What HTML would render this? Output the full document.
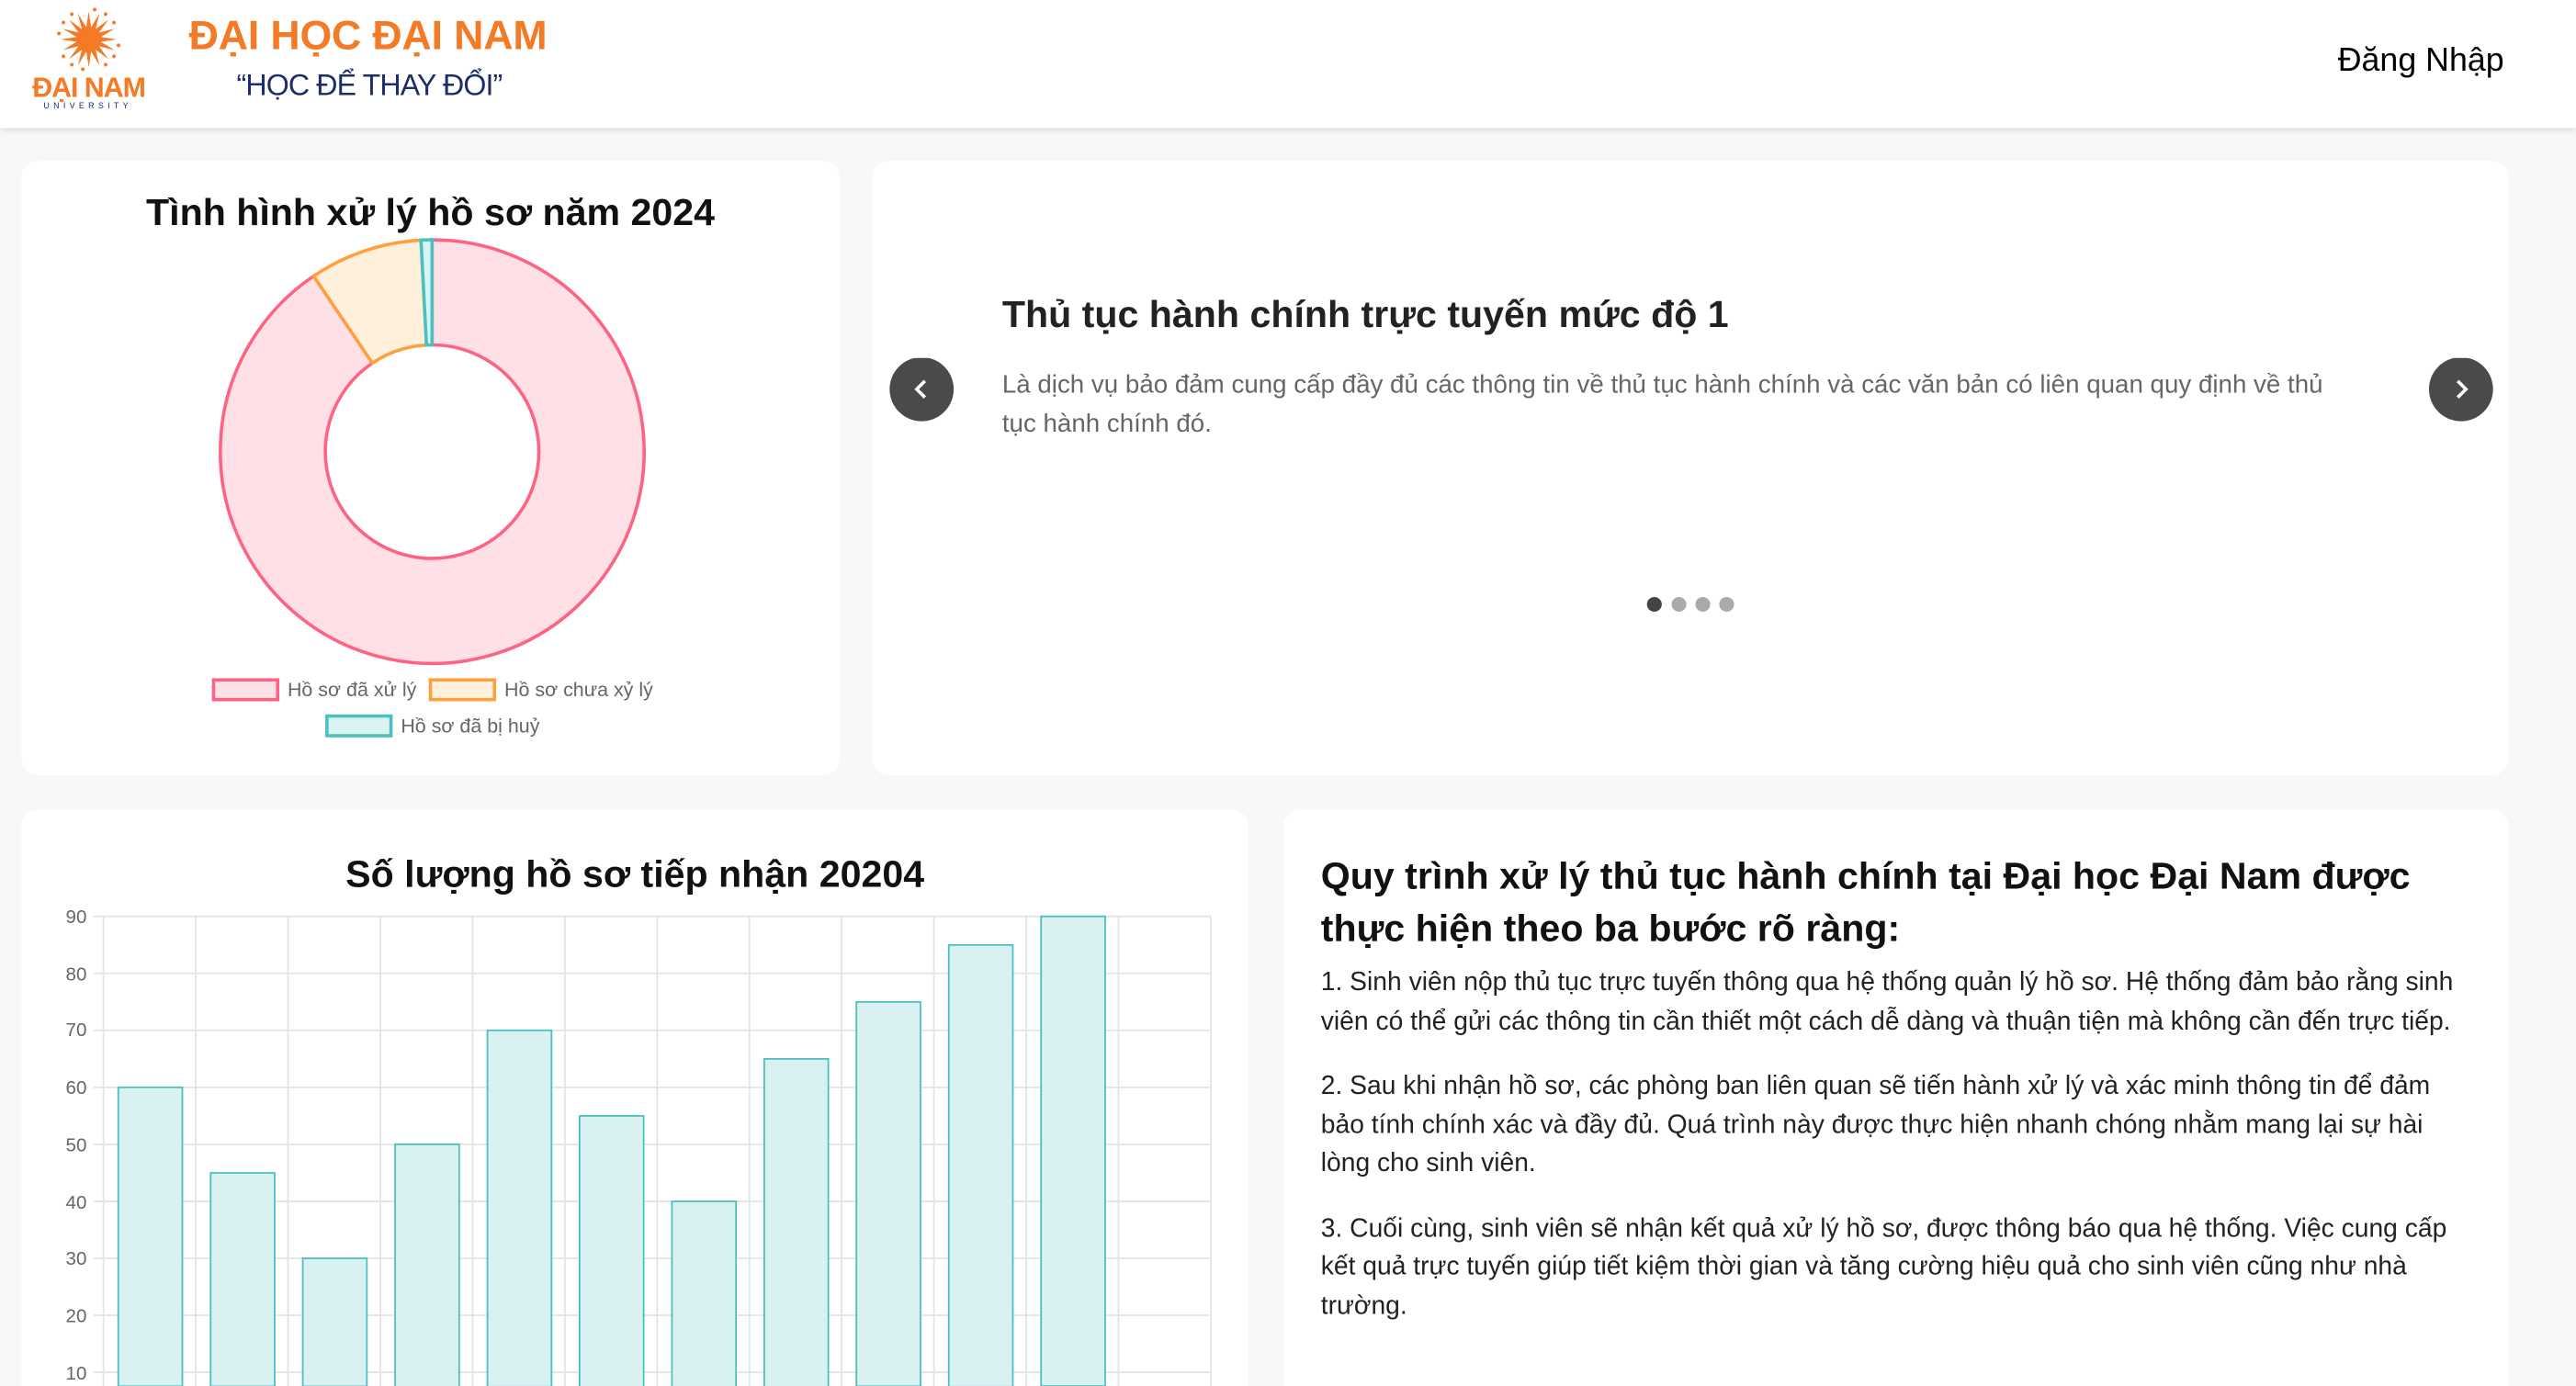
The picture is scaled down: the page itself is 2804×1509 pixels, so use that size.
<!DOCTYPE html>
<html><head><meta charset="utf-8"><style>
*{margin:0;padding:0;box-sizing:border-box}
html,body{width:2804px;height:1509px;overflow:hidden;background:#f7f8fa}
#w{position:absolute;left:0;top:0;width:1568px;height:844px;overflow:hidden;transform:scale(1.78827,1.7880);transform-origin:0 0;font-family:"Liberation Sans",Arial,sans-serif;background:#f7f8fa}
.ab{position:absolute}
.card{position:absolute;background:#fff;border-radius:10px}
header{position:absolute;left:0;top:0;width:1568px;height:78px;background:#fff;box-shadow:0 1px 4px rgba(0,0,0,.15)}
h2{font-weight:bold;color:#111;font-size:23px}
p.t{font-size:15.8px;color:#222;line-height:23.5px}
</style></head><body><div id="w">
<header>
<svg class="ab" style="left:33px;top:3px" width="42" height="42" viewBox="-21 -21 42 42">
<g fill="#f47a25">
<polygon points="0,-17 2.6,0 0,17 -2.6,0"/>
<polygon transform="rotate(22.5)" points="0,-17 2.6,0 0,17 -2.6,0"/>
<polygon transform="rotate(45)" points="0,-17 2.6,0 0,17 -2.6,0"/>
<polygon transform="rotate(67.5)" points="0,-17 2.6,0 0,17 -2.6,0"/>
<polygon transform="rotate(90)" points="0,-17 2.6,0 0,17 -2.6,0"/>
<polygon transform="rotate(112.5)" points="0,-17 2.6,0 0,17 -2.6,0"/>
<polygon transform="rotate(135)" points="0,-17 2.6,0 0,17 -2.6,0"/>
<polygon transform="rotate(157.5)" points="0,-17 2.6,0 0,17 -2.6,0"/>
<circle r="7"/>
<circle cx="0" cy="-18.5" r="1.1" transform="rotate(11.25)"/>
<circle cx="0" cy="-18.5" r="1.1" transform="rotate(56.25)"/>
<circle cx="0" cy="-18.5" r="1.1" transform="rotate(101.25)"/>
<circle cx="0" cy="-18.5" r="1.1" transform="rotate(146.25)"/>
<circle cx="0" cy="-18.5" r="1.1" transform="rotate(191.25)"/>
<circle cx="0" cy="-18.5" r="1.1" transform="rotate(236.25)"/>
<circle cx="0" cy="-18.5" r="1.1" transform="rotate(281.25)"/>
<circle cx="0" cy="-18.5" r="1.1" transform="rotate(326.25)"/>
<circle cx="0" cy="-18.5" r="1.1" transform="rotate(33.75)"/>
<circle cx="0" cy="-18.5" r="1.1" transform="rotate(123.75)"/>
<circle cx="0" cy="-18.5" r="1.1" transform="rotate(213.75)"/>
<circle cx="0" cy="-18.5" r="1.1" transform="rotate(303.75)"/>
</g></svg>
<div class="ab" style="left:13px;top:44px;width:82px;text-align:center;font-weight:bold;font-size:17px;color:#f47a25;letter-spacing:-.6px">ĐẠI NAM</div>
<div class="ab" style="left:16px;top:62px;width:75px;text-align:center;font-size:5px;color:#1d2d6b;letter-spacing:2.4px">UNIVERSITY</div>
<div class="ab" style="left:115px;top:8px;font-weight:bold;font-size:25px;color:#f47a25;letter-spacing:-.1px">ĐẠI HỌC ĐẠI NAM</div>
<div class="ab" style="left:144px;top:42px;font-size:18px;color:#1d2d6b;letter-spacing:-.5px">“HỌC ĐỂ THAY ĐỔI”</div>
<div class="ab" style="left:1423px;top:26px;font-size:20px;color:#000">Đăng Nhập</div>
</header>

<div class="card" style="left:13px;top:98px;width:498px;height:374px">
<h2 class="ab" style="left:0;width:498px;top:18px;text-align:center">Tình hình xử lý hồ sơ năm 2024</h2>
</div>
<svg class="ab" style="left:0;top:0" width="520" height="480">
<path d="M263,146 A129,129 0 1 1 190.9,168.1 L226.7,221.1 A65,65 0 1 0 263,210 Z" fill="#ffe0e6" stroke="#ff6384" stroke-width="2"/>
<path d="M190.9,168.1 A129,129 0 0 1 256.25,146.2 L259.6,210.1 A65,65 0 0 0 226.7,221.1 Z" fill="#fff0dc" stroke="#ff9f40" stroke-width="2"/>
<path d="M256.25,146.2 A129,129 0 0 1 263,146 L263,210 A65,65 0 0 0 259.6,210.1 Z" fill="#dbf2f2" stroke="#4bc0c0" stroke-width="2"/>
<rect x="130" y="414" width="39" height="12" fill="#ffe0e6" stroke="#ff6384" stroke-width="2"/>
<text x="175" y="424" font-size="12" fill="#666" font-family="Liberation Sans">Hồ sơ đã xử lý</text>
<rect x="262" y="414" width="39" height="12" fill="#fff0dc" stroke="#ff9f40" stroke-width="2"/>
<text x="307" y="424" font-size="12" fill="#666" font-family="Liberation Sans">Hồ sơ chưa xỷ lý</text>
<rect x="199" y="436" width="39" height="12" fill="#dbf2f2" stroke="#4bc0c0" stroke-width="2"/>
<text x="244" y="446" font-size="12" fill="#666" font-family="Liberation Sans">Hồ sơ đã bị huỷ</text>
</svg>

<div class="card" style="left:531px;top:98px;width:996px;height:374px">
<h2 class="ab" style="left:79px;top:80px;font-size:23px;color:#222">Thủ tục hành chính trực tuyến mức độ 1</h2>
<div class="ab" style="left:79px;top:125px;width:810px;font-size:15.5px;line-height:23.5px;color:#666">Là dịch vụ bảo đảm cung cấp đầy đủ các thông tin về thủ tục hành chính và các văn bản có liên quan quy định về thủ<br>tục hành chính đó.</div>
<svg class="ab" style="left:10px;top:120px" width="40" height="40"><circle cx="20" cy="19" r="19.5" fill="#4a4a4a"/><path d="M22,14 L17,19 L22,24" stroke="#fff" stroke-width="2" fill="none"/></svg>
<svg class="ab" style="left:947px;top:120px" width="40" height="40"><circle cx="20" cy="19" r="19.5" fill="#4a4a4a"/><path d="M18,14 L23,19 L18,24" stroke="#fff" stroke-width="2" fill="none"/></svg>
<svg class="ab" style="left:470px;top:264px" width="60" height="12"><circle cx="6" cy="6" r="4.5" fill="#444"/><circle cx="21" cy="6" r="4.5" fill="#aaa"/><circle cx="35.5" cy="6" r="4.5" fill="#aaa"/><circle cx="50" cy="6" r="4.5" fill="#aaa"/></svg>
</div>

<div class="card" style="left:13px;top:493px;width:747px;height:351px;border-radius:10px 10px 0 0">
<h2 class="ab" style="left:0;width:747px;top:26px;text-align:center">Số lượng hồ sơ tiếp nhận 20204</h2>
</div>
<svg class="ab" style="left:0;top:540px" width="760" height="304" viewBox="0 540 760 304" font-family="Liberation Sans" font-size="11.5" fill="#666">
<g stroke="#e4e4e4" stroke-width="1">
<line x1="57" x2="737" y1="558" y2="558"/><line x1="57" x2="737" y1="592.7" y2="592.7"/><line x1="57" x2="737" y1="627.4" y2="627.4"/><line x1="57" x2="737" y1="662.1" y2="662.1"/><line x1="57" x2="737" y1="696.8" y2="696.8"/><line x1="57" x2="737" y1="731.5" y2="731.5"/><line x1="57" x2="737" y1="766.2" y2="766.2"/><line x1="57" x2="737" y1="800.9" y2="800.9"/><line x1="57" x2="737" y1="835.6" y2="835.6"/>
<line x1="63" x2="63" y1="558" y2="844"/><line x1="119.2" x2="119.2" y1="558" y2="844"/><line x1="175.3" x2="175.3" y1="558" y2="844"/><line x1="231.5" x2="231.5" y1="558" y2="844"/><line x1="287.7" x2="287.7" y1="558" y2="844"/><line x1="343.8" x2="343.8" y1="558" y2="844"/><line x1="400" x2="400" y1="558" y2="844"/><line x1="456.2" x2="456.2" y1="558" y2="844"/><line x1="512.3" x2="512.3" y1="558" y2="844"/><line x1="568.5" x2="568.5" y1="558" y2="844"/><line x1="624.7" x2="624.7" y1="558" y2="844"/><line x1="680.8" x2="680.8" y1="558" y2="844"/><line x1="737" x2="737" y1="558" y2="844"/>
</g>
<text x="40" y="562">90</text><text x="40" y="597">80</text><text x="40" y="631">70</text><text x="40" y="666">60</text><text x="40" y="701">50</text><text x="40" y="736">40</text><text x="40" y="770">30</text><text x="40" y="805">20</text><text x="40" y="840">10</text>
<g fill="#daf1f2" stroke="#4bc0c0" stroke-width="1">
<rect x="72" y="662.1" width="39" height="182"/>
<rect x="128.2" y="714.2" width="39" height="130"/>
<rect x="184.3" y="766.2" width="39" height="78"/>
<rect x="240.5" y="696.8" width="39" height="148"/>
<rect x="296.7" y="627.4" width="39" height="217"/>
<rect x="352.8" y="679.5" width="39" height="165"/>
<rect x="409" y="731.5" width="39" height="113"/>
<rect x="465.2" y="644.8" width="39" height="200"/>
<rect x="521.3" y="610.1" width="39" height="234"/>
<rect x="577.5" y="575.4" width="39" height="269"/>
<rect x="633.7" y="558" width="39" height="286"/>
</g>
</svg>

<div class="card" style="left:781px;top:493px;width:746px;height:351px;border-radius:10px 10px 0 0">
<h2 class="ab" style="left:23px;top:24px;width:700px;line-height:32px">Quy trình xử lý thủ tục hành chính tại Đại học Đại Nam được thực hiện theo ba bước rõ ràng:</h2>
<div class="ab" style="left:23px;top:94px;width:700px">
<p class="t">1. Sinh viên nộp thủ tục trực tuyến thông qua hệ thống quản lý hồ sơ. Hệ thống đảm bảo rằng sinh viên có thể gửi các thông tin cần thiết một cách dễ dàng và thuận tiện mà không cần đến trực tiếp.</p>
<p class="t" style="margin-top:16px">2. Sau khi nhận hồ sơ, các phòng ban liên quan sẽ tiến hành xử lý và xác minh thông tin để đảm bảo tính chính xác và đầy đủ. Quá trình này được thực hiện nhanh chóng nhằm mang lại sự hài lòng cho sinh viên.</p>
<p class="t" style="margin-top:16px">3. Cuối cùng, sinh viên sẽ nhận kết quả xử lý hồ sơ, được thông báo qua hệ thống. Việc cung cấp kết quả trực tuyến giúp tiết kiệm thời gian và tăng cường hiệu quả cho sinh viên cũng như nhà trường.</p>
</div>
</div>
</div></body></html>
